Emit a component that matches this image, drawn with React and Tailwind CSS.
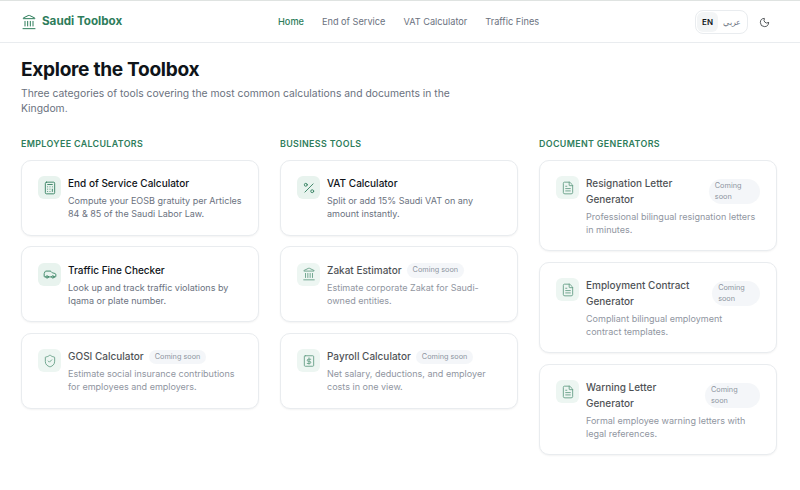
import React from "react";
import { Landmark, Moon, Calculator, Car, ShieldCheck, Percent, FileText } from "lucide-react";

const PayrollIcon = ({ size, strokeWidth }) => (
  <svg width={size} height={size} viewBox="0 0 24 24" fill="none" stroke="currentColor" strokeWidth={strokeWidth} strokeLinecap="round" strokeLinejoin="round">
    <rect x="4" y="3" width="16" height="18" rx="1.5" />
    <path d="M12 6.5v11" />
    <path d="M15 9h-4.2a1.8 1.8 0 0 0 0 3.6h2.4a1.8 1.8 0 0 1 0 3.6H9" />
  </svg>
);

const columns = [
  {
    title: "EMPLOYEE CALCULATORS",
    tools: [
      { name: "End of Service Calculator", desc: "Compute your EOSB gratuity per Articles 84 & 85 of the Saudi Labor Law.", icon: Calculator },
      { name: "Traffic Fine Checker", desc: "Look up and track traffic violations by Iqama or plate number.", icon: Car },
      { name: "GOSI Calculator", desc: "Estimate social insurance contributions for employees and employers.", icon: ShieldCheck, soon: true },
    ],
  },
  {
    title: "BUSINESS TOOLS",
    tools: [
      { name: "VAT Calculator", desc: "Split or add 15% Saudi VAT on any amount instantly.", icon: Percent },
      { name: "Zakat Estimator", desc: "Estimate corporate Zakat for Saudi-owned entities.", icon: Landmark, soon: true },
      { name: "Payroll Calculator", desc: "Net salary, deductions, and employer costs in one view.", icon: PayrollIcon, soon: true },
    ],
  },
  {
    title: "DOCUMENT GENERATORS",
    tools: [
      { name: "Resignation Letter Generator", desc: "Professional bilingual resignation letters in minutes.", icon: FileText, soon: true },
      { name: "Employment Contract Generator", desc: "Compliant bilingual employment contract templates.", icon: FileText, soon: true },
      { name: "Warning Letter Generator", desc: "Formal employee warning letters with legal references.", icon: FileText, soon: true },
    ],
  },
];

const ToolCard = ({ tool }) => {
  const Icon = tool.icon;
  return (
    <div className="rounded-[10px] border border-[#e9ecef] bg-white px-4 pt-[15.5px] pb-[14.5px] shadow-[0_1px_2px_rgba(0,0,0,0.05)]">
      <div className={`flex gap-[7px] ${tool.soon ? "opacity-75" : ""}`}>
        <div className="flex h-[23px] w-[23px] shrink-0 items-center justify-center rounded-md bg-[#e8f3ee] text-[#2e7d5b]">
          <Icon size={14} strokeWidth={1.5} />
        </div>
        <div className="min-w-0 flex-1">
          <div className="flex items-center gap-[5px]">
            <h3 className="text-[10px] leading-[15.5px] font-medium text-[#0f1419]">{tool.name}</h3>
            {tool.soon && (
              <span className="rounded-full bg-[#f1f4f7] px-[6px] py-[2px] text-[7.3px] leading-[10.5px] text-[#66707f]">
                Coming soon
              </span>
            )}
          </div>
          <p className="mt-[2.5px] text-[9.02px] leading-[13px] text-[#6b7280]">{tool.desc}</p>
        </div>
      </div>
    </div>
  );
};

export default function App() {
  return (
    <div className="min-h-[490px] bg-white font-['Inter',sans-serif]">
      <header className="flex h-[43px] items-center border-t border-b border-t-[#dfe3e1] border-b-[#e9ecef] bg-white pt-[1px] pr-[30px] pl-[21px]">
        <div className="flex w-[257px] items-center gap-[5px] text-[#2e7d5b]">
          <Landmark size={16} strokeWidth={1.5} />
          <span className="text-[11.65px] font-bold">Saudi Toolbox</span>
        </div>
        <nav className="flex gap-[18px] text-[9.2px] text-[#6b7280]">
          <span className="font-medium text-[#2e7d5b]">Home</span>
          <span>End of Service</span>
          <span>VAT Calculator</span>
          <span>Traffic Fines</span>
        </nav>
        <div className="ml-auto flex items-center gap-[11px]">
          <div className="flex rounded-lg border border-[#e9ecef] p-[1px] text-[8px]">
            <span className="rounded-md bg-[#f3f5f6] px-[5px] py-[4px] leading-[12px] font-semibold text-[#0f1419]">EN</span>
            <span className="px-[5px] py-[4px] leading-[12px] text-[#6b7280]">عربي</span>
          </div>
          <Moon size={11} strokeWidth={1.5} className="text-[#0f1419]" />
        </div>
      </header>
      <main className="px-[21px] pt-[13px] pr-[23px]">
        <h1 className="text-[19.1px] leading-[26px] font-bold tracking-[-0.3px] text-[#0f1419]">Explore the Toolbox</h1>
        <p className="mt-[3.5px] max-w-[450px] text-[10.35px] leading-[15.5px] text-[#6b7280]">
          Three categories of tools covering the most common calculations and documents in the Kingdom.
        </p>
        <div className="mt-[20px] grid grid-cols-3 gap-[21px]">
          {columns.map((col) => (
            <section key={col.title}>
              <h2 className="mb-[10px] text-[8.9px] leading-[13px] font-semibold tracking-[0.35px] text-[#2e7d5b]">{col.title}</h2>
              <div className="flex flex-col gap-[10.5px]">
                {col.tools.map((tool) => (
                  <ToolCard key={tool.name} tool={tool} />
                ))}
              </div>
            </section>
          ))}
        </div>
      </main>
    </div>
  );
}
